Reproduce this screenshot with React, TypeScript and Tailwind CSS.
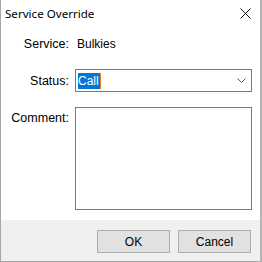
import React from 'react';

const ChevronDown = () => (
  <svg width="9" height="6" viewBox="0 0 9 6" className="shrink-0">
    <path d="M0.5 0.5 L4.5 4.5 L8.5 0.5" fill="none" stroke="#555" strokeWidth="1" />
  </svg>
);

const CloseIcon = () => (
  <svg width="11" height="11" viewBox="0 0 11 11">
    <path d="M0.5 0.5 L10.5 10.5 M10.5 0.5 L0.5 10.5" fill="none" stroke="#111" strokeWidth="1" />
  </svg>
);

export default function App() {
  return (
    <div
      className="w-[262px] h-[262px] bg-white flex flex-col border-l border-b border-r-2 border-l-[#a6a6a6] border-b-[#a6a6a6] border-r-[#b4b4b4] text-[12px] text-black"
      style={{ fontFamily: '"Liberation Sans", Arial, sans-serif' }}
    >
      {/* Title bar */}
      <div className="h-[30px] flex items-start justify-between shrink-0">
        <span className="pl-[4px] pt-[6px] leading-[16px] text-[11.6px]" style={{ fontFamily: '"Noto Sans", sans-serif' }}>
          Service Override
        </span>
        <div className="pt-[8px] pr-[9px]">
          <CloseIcon />
        </div>
      </div>

      {/* Body */}
      <div className="flex-1 flex flex-col pr-[8px]">
        <div className="flex mt-[7px] h-[14px] leading-[14px]">
          <span className="w-[68px] text-right text-[12.5px]">Service:</span>
          <span className="pl-[8px]">Bulkies</span>
        </div>

        <div className="flex mt-[18px] items-center">
          <span className="w-[68px] text-right leading-[14px] text-[12.5px]">Status:</span>
          <div className="ml-[6px] w-[177px] h-[23px] border border-[#7a7a7a] flex items-center justify-between pl-[2px] pr-[5px]">
            <div className="flex items-center h-[16px]">
              <span className="bg-[#0078d7] text-white leading-[16px] pr-[1px]">Call</span>
              <span className="w-[1px] h-[16px] bg-[#e8821e]" />
            </div>
            <ChevronDown />
          </div>
        </div>

        <div className="flex mt-[15px]">
          <span className="w-[68px] text-right leading-[14px] pt-[4px] text-[12.5px]">Comment:</span>
          <div className="ml-[6px] w-[177px] h-[103px] border border-[#7a7a7a] bg-white" />
        </div>
      </div>

      {/* Footer */}
      <div className="h-[41px] bg-[#f0f0f0] flex justify-end items-start gap-[8px] pt-[10px] pr-[9px] shrink-0">
        <button className="w-[73px] h-[23px] bg-[#e1e1e1] border border-[#adadad] leading-[20px]">OK</button>
        <button className="w-[73px] h-[23px] bg-[#e1e1e1] border border-[#adadad] leading-[20px]">Cancel</button>
      </div>
    </div>
  );
}
